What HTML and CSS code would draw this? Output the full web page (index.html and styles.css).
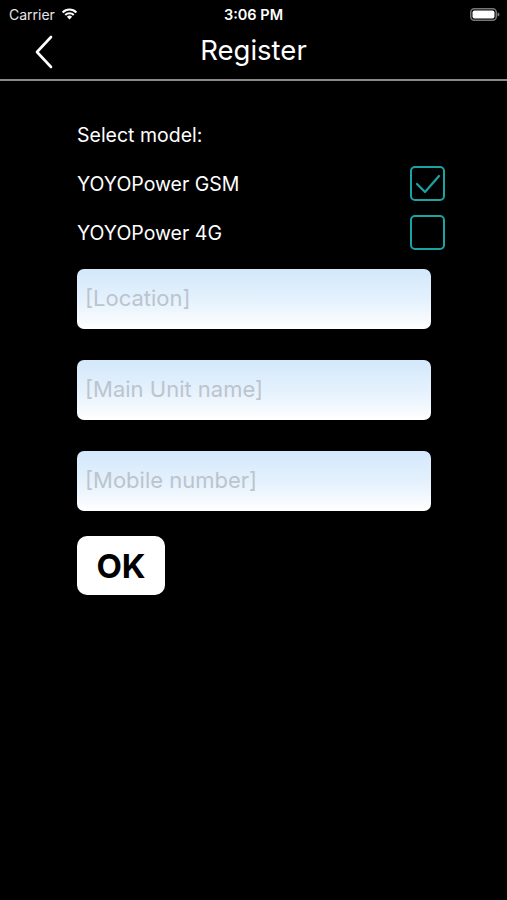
FILE: index.html
```html
<!DOCTYPE html>
<html>
<head>
<meta charset="utf-8">
<link rel="stylesheet" href="styles.css">
</head>
<body>
<div class="status">
  <div class="status-left">
    <span class="carrier">Carrier</span>
    <svg class="wifi" width="19" height="14" viewBox="0 0 19 14">
      <path d="M9.5 13.5 L6.9 10.7 A3.7 3.7 0 0 1 12.1 10.7 Z" fill="#fff"/>
      <path d="M4.5 8.3 A7 7 0 0 1 14.5 8.3 L13 9.8 A4.9 4.9 0 0 0 6 9.8 Z" fill="#fff"/>
      <path d="M1.9 5.7 A10.6 10.6 0 0 1 17.1 5.7 L15.6 7.2 A8.5 8.5 0 0 0 3.4 7.2 Z" fill="#fff"/>
    </svg>
  </div>
  <div class="time">3:06 PM</div>
  <div class="status-right">
    <svg width="30" height="13" viewBox="0 0 30 13">
      <rect x="0.75" y="0.75" width="25.5" height="11.5" rx="3.5" fill="none" stroke="#777" stroke-width="1.5"/>
      <rect x="2.5" y="2.5" width="22" height="8" rx="2" fill="#fff"/>
      <path d="M27.5 4.5 A2 2 0 0 1 27.5 8.5 Z" fill="#777"/>
    </svg>
  </div>
</div>
<div class="navbar">
  <svg class="back" width="20" height="34" viewBox="0 0 20 34">
    <path d="M17 2 L3 17 L17 32" fill="none" stroke="#fff" stroke-width="2.6" stroke-linecap="round" stroke-linejoin="round"/>
  </svg>
  <div class="title">Register</div>
</div>
<div class="separator"></div>
<main class="content">
  <div class="label">Select model:</div>
  <div class="option">
    <span>YOYOPower GSM</span>
    <span class="check checked">
      <svg width="31" height="31" viewBox="0 0 31 31">
        <path d="M5 16 L13 24 L27 8" fill="none" stroke="#1aa3a3" stroke-width="2.2" stroke-linecap="round" stroke-linejoin="round"/>
      </svg>
    </span>
  </div>
  <div class="option">
    <span>YOYOPower 4G</span>
    <span class="check"></span>
  </div>
  <div class="fields">
    <div class="field">[Location]</div>
    <div class="field">[Main Unit name]</div>
    <div class="field">[Mobile number]</div>
  </div>
  <div class="ok">OK</div>
</main>
</body>
</html>
```
FILE: styles.css
```css
* { box-sizing: border-box; }
html, body { margin: 0; padding: 0; background: #000; }
body {
  width: 507px;
  height: 900px;
  color: #fff;
  font-family: Inter, "Liberation Sans", Arial, sans-serif;
  overflow: hidden;
}
.status {
  height: 28px;
  display: flex;
  align-items: center;
  justify-content: space-between;
  padding: 0 7px 0 9px;
  position: relative;
}
.status-left { display: flex; align-items: center; gap: 5px; }
.carrier { font-size: 14px; color: #e6e6e6; }
.wifi { margin-top: -3px; }
.time {
  position: absolute;
  left: 0; right: 0;
  text-align: center;
  font-size: 14.5px;
  font-weight: 600;
  pointer-events: none;
}
.status-right { display: flex; align-items: center; }
.navbar {
  height: 51px;
  display: flex;
  align-items: center;
  justify-content: center;
  position: relative;
}
.back { position: absolute; left: 34px; top: 7px; }
.title { font-size: 27.5px; margin-top: -8px; }
.separator { height: 2px; background: #8a8a8a; }
.content {
  padding: 42px 0 0 77px;
  display: flex;
  flex-direction: column;
}
.label { font-size: 19.5px; line-height: 24px; }
.option {
  width: 368px;
  display: flex;
  align-items: center;
  justify-content: space-between;
  font-size: 19.5px;
  height: 35px;
}
.label + .option { margin-top: 19px; }
.option + .option { margin-top: 14px; }
.check {
  width: 35px;
  height: 35px;
  border: 2px solid #1aa3a3;
  border-radius: 5px;
  display: flex;
  align-items: center;
  justify-content: center;
}
.fields {
  margin-top: 19px;
  display: flex;
  flex-direction: column;
  gap: 31px;
}
.field {
  width: 354px;
  height: 60px;
  border-radius: 7px;
  background: linear-gradient(to bottom, #d3e8fb 0%, #e6f2fd 55%, #ffffff 100%);
  color: #bcc4cc;
  font-size: 22px;
  display: flex;
  align-items: center;
  padding: 0 8px 2px;
}
.ok {
  margin-top: 25px;
  width: 88px;
  height: 59px;
  background: #fff;
  border-radius: 10px;
  color: #000;
  font-weight: 700;
  font-size: 33px;
  display: flex;
  align-items: center;
  justify-content: center;
}
```
